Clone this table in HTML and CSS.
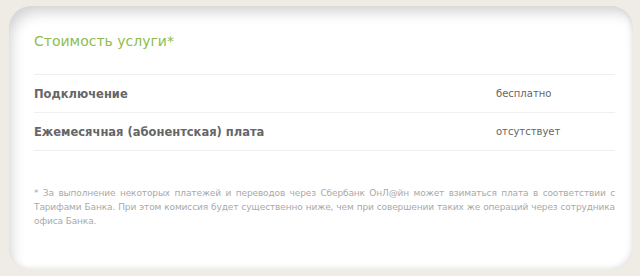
FILE: index.html
```html
<!DOCTYPE html>
<html lang="ru">
<head>
<meta charset="utf-8">
<link rel="stylesheet" href="styles.css">
</head>
<body>
<div class="card">
  <h2 class="title">Стоимость услуги*</h2>
  <div class="rows">
    <div class="row"><span class="name">Подключение</span><span class="value">бесплатно</span></div>
    <div class="row"><span class="name">Ежемесячная (абонентская) плата</span><span class="value">отсутствует</span></div>
  </div>
  <p class="note">* За выполнение некоторых платежей и переводов через Сбербанк ОнЛ@йн может взиматься плата в соответствии с Тарифами Банка. При этом комиссия будет существенно ниже, чем при совершении таких же операций через сотрудника офиса Банка.</p>
</div>
</body>
</html>
```

FILE: styles.css
```css
html, body {
  margin: 0;
  padding: 0;
}
body {
  background: #efece5;
  font-family: "DejaVu Sans", Verdana, sans-serif;
  padding: 6px 7px 6px 9px;
  height: 276px;
  box-sizing: border-box;
}
.card {
  height: 264px;
  box-sizing: border-box;
  background: #fff;
  border-radius: 22px;
  padding: 24px 18px 0 25px;
  box-shadow: inset 6px 10px 14px -4px rgba(0,0,0,0.18), inset -3px -3px 6px -2px rgba(0,0,0,0.12);
}
.title {
  margin: 0;
  font-weight: normal;
  font-size: 14px;
  line-height: 22px;
  color: #8dbd4f;
  height: 44px;
}
.rows {
  border-top: 1px solid #efefef;
}
.row {
  display: flex;
  align-items: center;
  height: 37px;
  border-bottom: 1px solid #efefef;
}
.name {
  flex: 1;
  font-weight: bold;
  font-size: 11.5px;
  color: #666;
}
.value {
  width: 119px;
  font-size: 10px;
  color: #666;
}
.note {
  margin: 35px 0 0;
  font-size: 9px;
  line-height: 14px;
  letter-spacing: -0.12px;
  color: #a9a9a9;
  text-align: justify;
}
```
